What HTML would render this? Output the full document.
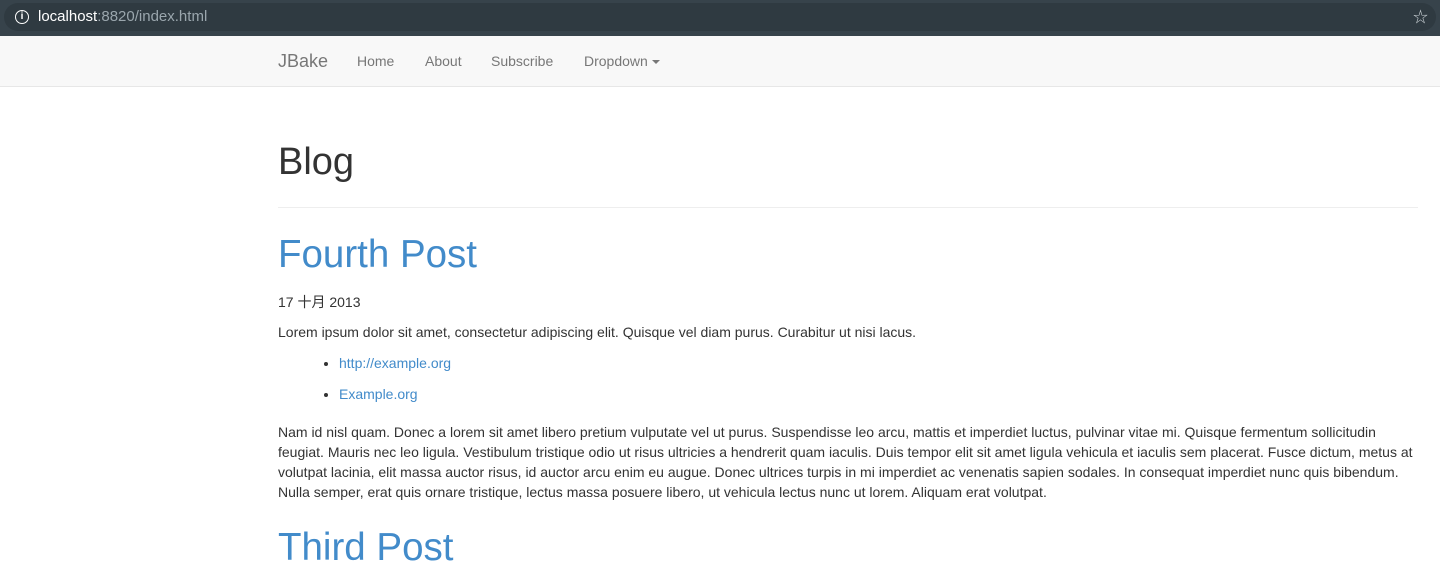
<!DOCTYPE html>
<html><head><meta charset="utf-8"><style>
*{box-sizing:border-box}
body{margin:0;width:1440px;height:575px;overflow:hidden;font-family:"Liberation Sans","Noto Sans CJK SC",sans-serif;font-size:14px;line-height:20px;color:#333;background:#fff}
.bar{height:36px;background:#37434b;position:relative}
.url{position:absolute;left:4px;top:3px;right:4px;height:28px;background:#2f3a41;border-radius:14px;color:#9aa6ad;font-size:15px;line-height:28px;padding-left:34px}
.url b{font-weight:normal;color:#fff}
.url .i{position:absolute;left:11px;top:7px;width:14px;height:14px;border:1.5px solid #fff;border-radius:50%;color:#fff;font-size:10px;line-height:11px;text-align:center;font-weight:bold}
.star{position:absolute;right:12px;top:8px;color:#cfd6da;font-size:15px}
.nav{height:51px;background:#f8f8f8;border-bottom:1px solid #e7e7e7;position:relative;color:#777}
.nav span{position:absolute;top:15px;font-size:14px}
.c{position:absolute;left:278px;width:1140px}
h1{margin:0;font-weight:500;font-size:38.5px}
a{color:#428bca;text-decoration:none}
p{margin:0}
</style></head><body>
<div class="bar"><div class="url"><span class="i">i</span><b>localhost</b>:8820/index.html</div><span class="star">☆</span></div>
<div class="nav">
<span style="left:278px;font-size:18px;top:15px">JBake</span>
<span style="left:357px">Home</span>
<span style="left:425px">About</span>
<span style="left:491px">Subscribe</span>
<span style="left:584px">Dropdown <span style="position:static;display:inline-block;border-top:4px solid #777;border-left:4px solid transparent;border-right:4px solid transparent;vertical-align:middle"></span></span>
</div>
<div class="c" style="top:140px"><h1 style="font-size:38px;line-height:44px">Blog</h1></div>
<div class="c" style="top:207px;border-top:1px solid #eee"></div>
<div class="c" style="top:232px"><h1 style="line-height:46px;color:#428bca"><a>Fourth Post</a></h1></div>
<div class="c" style="top:292px">17 十月 2013</div>
<div class="c" style="top:322px">Lorem ipsum dolor sit amet, consectetur adipiscing elit. Quisque vel diam purus. Curabitur ut nisi lacus.</div>
<div class="c" style="top:353px"><ul style="margin:0;padding-left:61px"><li style="margin-bottom:11px"><a>http://example.org</a></li><li><a>Example.org</a></li></ul></div>
<div class="c" style="top:422px">Nam id nisl quam. Donec a lorem sit amet libero pretium vulputate vel ut purus. Suspendisse leo arcu, mattis et imperdiet luctus, pulvinar vitae mi. Quisque fermentum sollicitudin feugiat. Mauris nec leo ligula. Vestibulum tristique odio ut risus ultricies a hendrerit quam iaculis. Duis tempor elit sit amet ligula vehicula et iaculis sem placerat. Fusce dictum, metus at volutpat lacinia, elit massa auctor risus, id auctor arcu enim eu augue. Donec ultrices turpis in mi imperdiet ac venenatis sapien sodales. In consequat imperdiet nunc quis bibendum. Nulla semper, erat quis ornare tristique, lectus massa posuere libero, ut vehicula lectus nunc ut lorem. Aliquam erat volutpat.</div>
<div class="c" style="top:525px"><h1 style="line-height:46px"><a>Third Post</a></h1></div>
</body></html>
